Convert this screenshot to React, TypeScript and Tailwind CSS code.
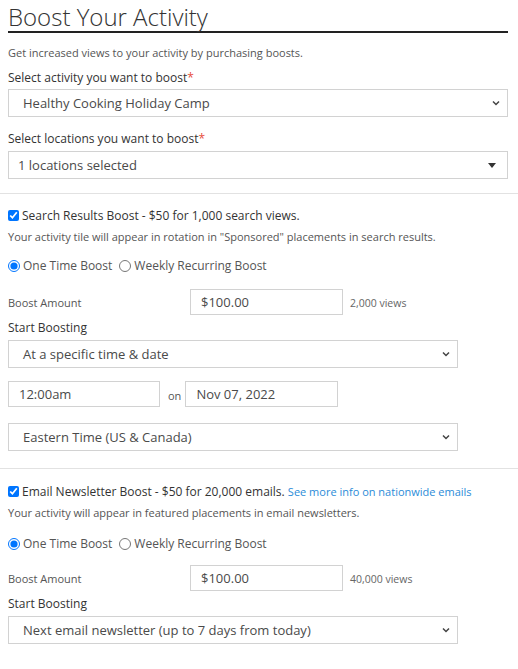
import { useState } from 'react'

const font = { fontFamily: '"Open Sans", "Liberation Sans", sans-serif' }

function Chevron() {
  return (
    <svg width="10" height="10" viewBox="0 0 10 10" className="shrink-0">
      <path d="M2 3.5 L5 6.5 L8 3.5" fill="none" stroke="#444" strokeWidth="1.5" />
    </svg>
  )
}

function FakeSelect({ value, className }: { value: string; className: string }) {
  return (
    <div className={`flex h-[28px] items-center justify-between border border-[#d2d2d2] bg-white pl-[14px] pr-[6px] text-[13px] leading-[16px] text-[#4a4a4a] ${className}`}>
      <span>{value}</span>
      <Chevron />
    </div>
  )
}

function TextBox({ value, className }: { value: string; className: string }) {
  return (
    <div className={`flex h-[26px] items-center border border-[#d2d2d2] bg-white px-[10px] text-[13px] leading-[16px] text-[#4a4a4a] ${className}`}>
      {value}
    </div>
  )
}

function Radios({ name }: { name: string }) {
  const [v, setV] = useState('one')
  return (
    <div className="flex h-[15px] items-center text-[12px] leading-[15px] text-[#555]">
      <label className="flex items-center">
        <input type="radio" name={name} checked={v === 'one'} onChange={() => setV('one')} className="m-0 h-[12px] w-[12px]" />
        <span className="ml-[3px]">One Time Boost</span>
      </label>
      <label className="ml-[7px] flex items-center">
        <input type="radio" name={name} checked={v === 'weekly'} onChange={() => setV('weekly')} className="m-0 h-[12px] w-[12px]" />
        <span className="ml-[3px]">Weekly Recurring Boost</span>
      </label>
    </div>
  )
}

function AmountRow({ views }: { views: string }) {
  return (
    <div className="flex items-center">
      <div className="w-[182px] pt-[1px] text-[11px] leading-[14px] text-[#555]">Boost Amount</div>
      <TextBox value="$100.00" className="w-[153px]" />
      <div className="ml-[7px] pt-[1px] text-[10.5px] leading-[14px] text-[#666]">{views}</div>
    </div>
  )
}

export default function App() {
  return (
    <div style={font} className="w-[518px] bg-white text-[#333]">
      <div className="pl-[8px] pr-[10px] pt-[3px]">
        <h1 className="border-b-2 border-[#222] text-[24px] font-light leading-[28px] text-[#333]">Boost Your Activity</h1>
        <p className="mt-[13px] text-[11px] leading-[14px] text-[#555]">Get increased views to your activity by purchasing boosts.</p>

        <div className="mt-[10px] text-[12px] leading-[15px] text-[#333]">
          Select activity you want to boost<span className="text-[#e74c3c]">*</span>
        </div>
        <FakeSelect value="Healthy Cooking Holiday Camp" className="mt-[4px] w-full" />

        <div className="mt-[14px] text-[12px] leading-[15px] text-[#333]">
          Select locations you want to boost<span className="text-[#e74c3c]">*</span>
        </div>
        <div className="mt-[5px] flex h-[28px] w-full items-center justify-between border border-[#d2d2d2] bg-white pl-[9px] pr-[11px] text-[13px] leading-[16px] text-[#4a4a4a]">
          <span>1 locations selected</span>
          <svg width="8" height="5" viewBox="0 0 8 5">
            <path d="M0 0 H8 L4 5 Z" fill="#333" />
          </svg>
        </div>
      </div>

      <div className="mt-[14px] border-t border-[#e2e2e2]" />

      {/* Search results boost */}
      <div className="px-[8px] pt-[14px]">
        <label className="flex h-[15px] items-center text-[12px] leading-[15px] text-[#333]">
          <input type="checkbox" defaultChecked className="m-0 h-[11px] w-[11px]" />
          <span className="ml-[3px]">Search Results Boost - $50 for 1,000 search views.</span>
        </label>
        <p className="mt-[7px] text-[11px] leading-[14px] text-[#555]">Your activity tile will appear in rotation in "Sponsored" placements in search results.</p>
        <div className="mt-[14px]">
          <Radios name="search" />
        </div>
        <div className="mt-[16px]">
          <AmountRow views="2,000 views" />
        </div>
        <div className="mt-[5px] text-[12px] leading-[15px] text-[#333]">Start Boosting</div>
        <FakeSelect value="At a specific time & date" className="mt-[5px] w-[450px]" />
        <div className="mt-[13px] flex items-center">
          <TextBox value="12:00am" className="w-[152px]" />
          <span className="ml-[8px] mr-[4px] pt-[3px] text-[11px] leading-[14px] text-[#555]">on</span>
          <TextBox value="Nov 07, 2022" className="w-[153px]" />
        </div>
        <FakeSelect value="Eastern Time (US & Canada)" className="mt-[16px] w-[450px]" />
      </div>

      <div className="mt-[17px] border-t border-[#e2e2e2]" />

      {/* Email newsletter boost */}
      <div className="px-[8px] pt-[15px]">
        <label className="flex h-[15px] items-center text-[12px] leading-[15px] text-[#333]">
          <input type="checkbox" defaultChecked className="m-0 h-[11px] w-[11px]" />
          <span className="ml-[3px]">
            Email Newsletter Boost - $50 for 20,000 emails.{' '}
            <a href="#" className="text-[11px] text-[#2a8bd8]">See more info on nationwide emails</a>
          </span>
        </label>
        <p className="mt-[7px] text-[11px] leading-[14px] text-[#555]">Your activity will appear in featured placements in email newsletters.</p>
        <div className="mt-[16px]">
          <Radios name="email" />
        </div>
        <div className="mt-[14px]">
          <AmountRow views="40,000 views" />
        </div>
        <div className="mt-[5px] text-[12px] leading-[15px] text-[#333]">Start Boosting</div>
        <FakeSelect value="Next email newsletter (up to 7 days from today)" className="mt-[5px] w-[450px]" />
      </div>
      <div className="h-[25px]" />
    </div>
  )
}
